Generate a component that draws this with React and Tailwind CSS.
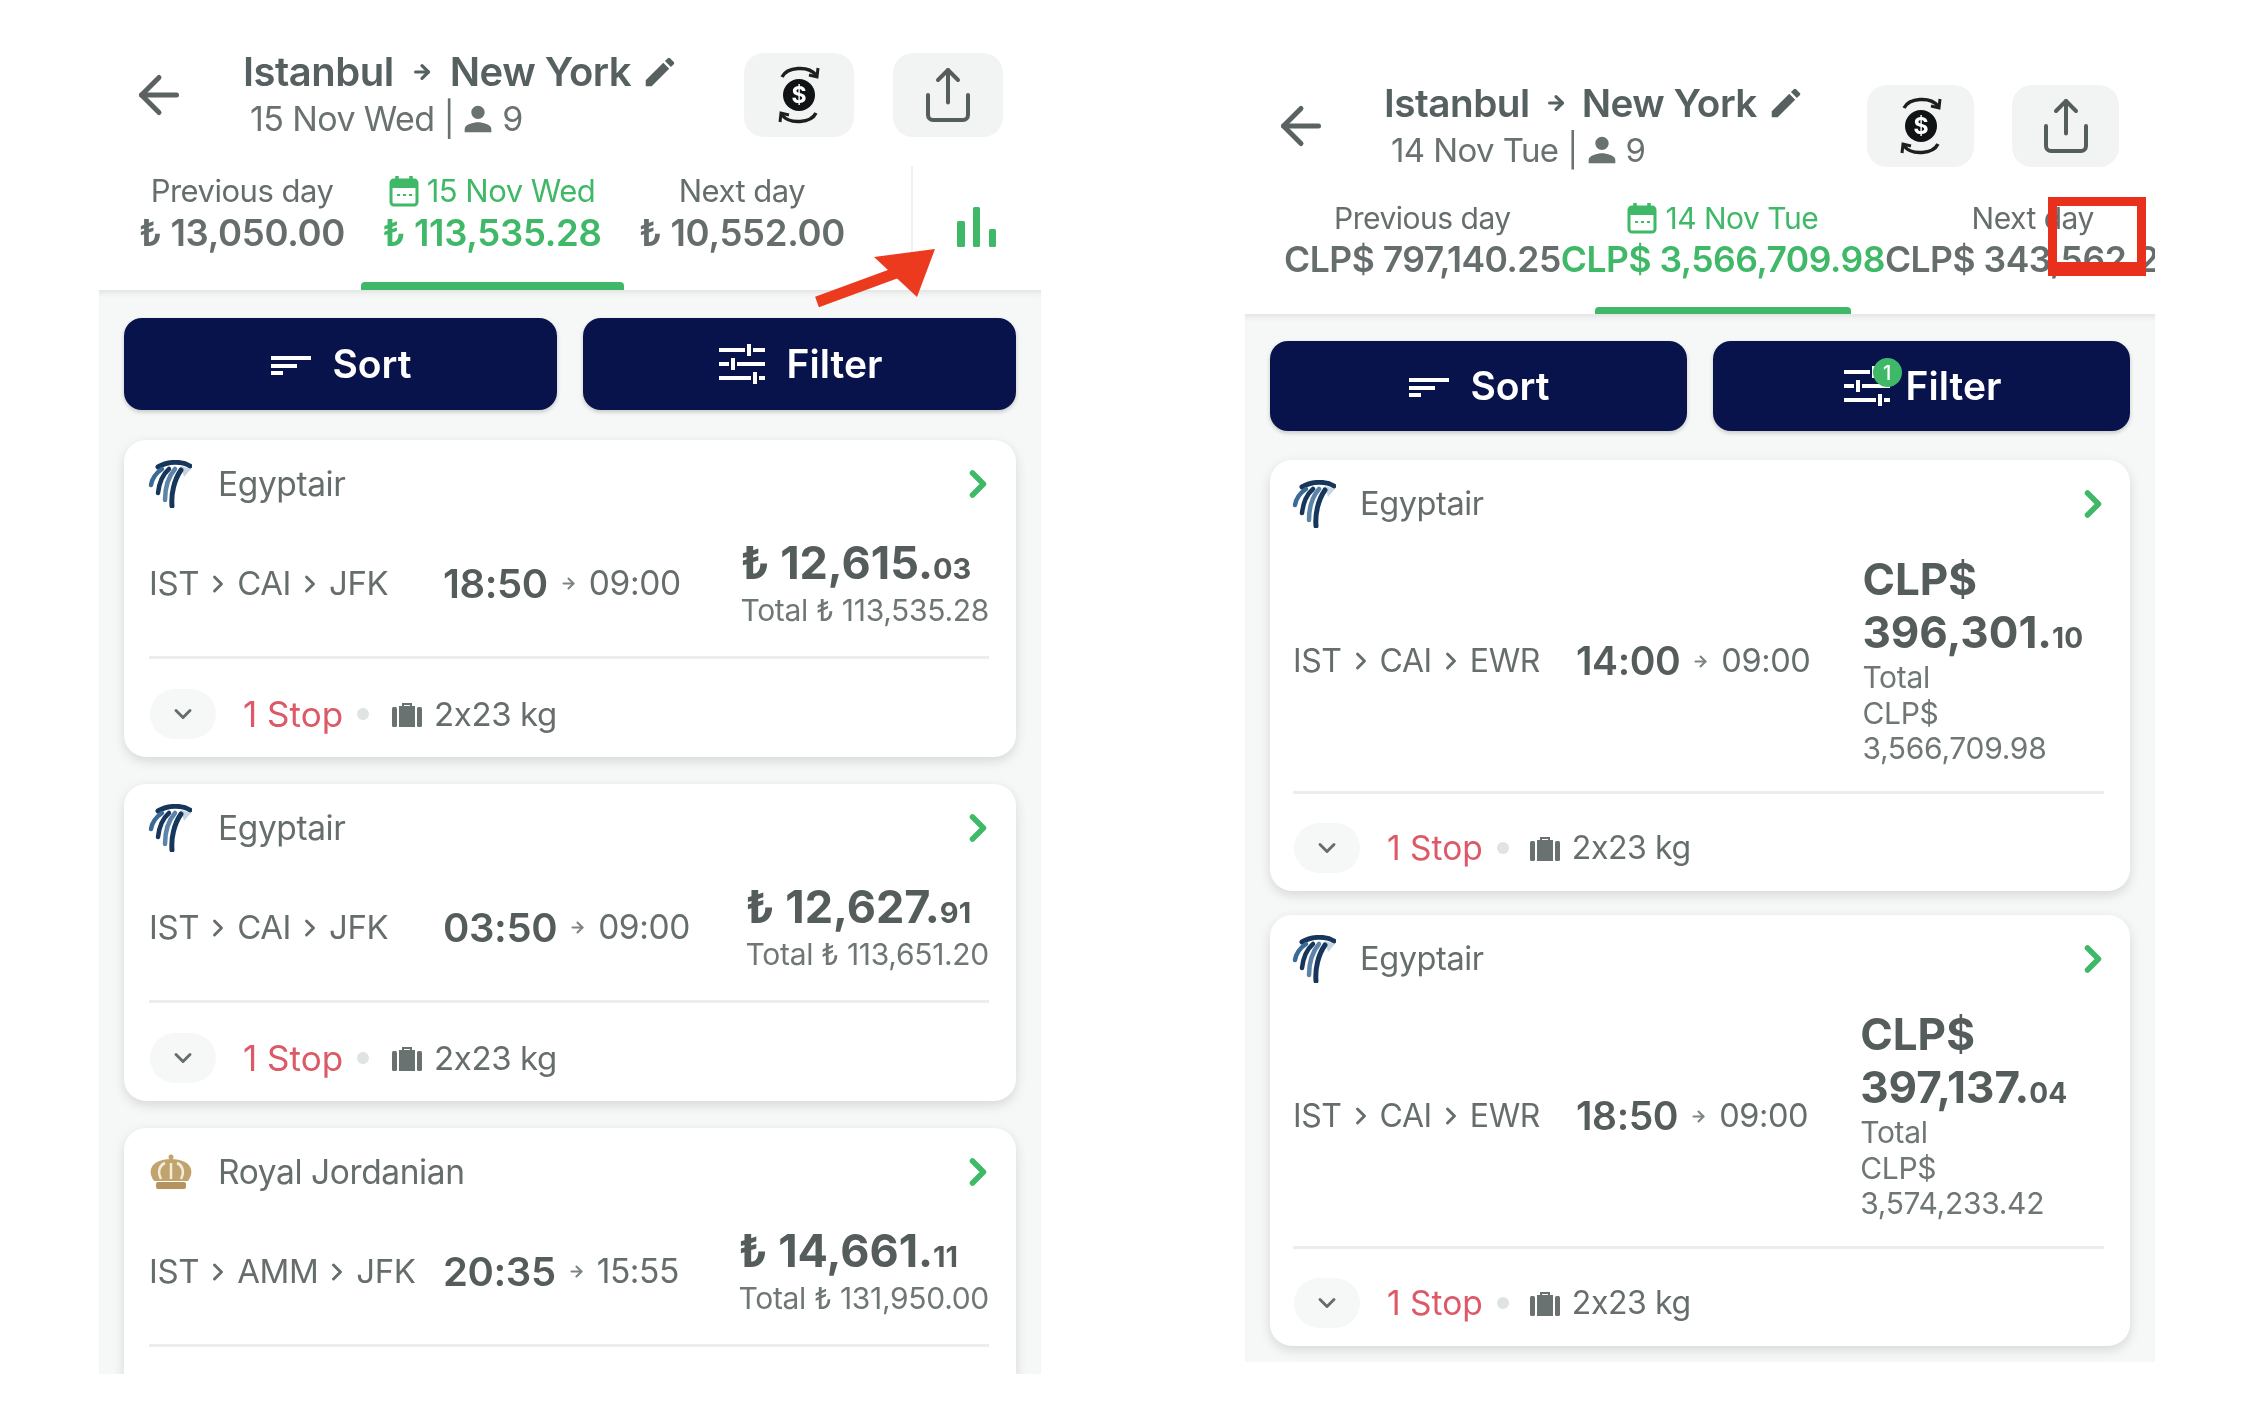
import React from "react";
import { ArrowLeft, ArrowRight, ChevronDown, ChevronRight, Share } from "lucide-react";
import { MdEdit, MdPerson } from "react-icons/md";

const leftFlights = [
  {
    logo: "egypt",
    airline: "Egyptair",
    route: ["IST", "CAI", "JFK"],
    depart: "18:50",
    arrive: "09:00",
    currency: "₺",
    whole: "12,615.",
    cents: "03",
    total: ["Total ₺ 113,535.28"],
  },
  {
    logo: "egypt",
    airline: "Egyptair",
    route: ["IST", "CAI", "JFK"],
    depart: "03:50",
    arrive: "09:00",
    currency: "₺",
    whole: "12,627.",
    cents: "91",
    total: ["Total ₺ 113,651.20"],
  },
  {
    // cut off by the bottom of the screen, the footer row is not visible
    logo: "crown",
    airline: "Royal Jordanian",
    route: ["IST", "AMM", "JFK"],
    depart: "20:35",
    arrive: "15:55",
    currency: "₺",
    whole: "14,661.",
    cents: "11",
    total: ["Total ₺ 131,950.00"],
    noFooter: true,
  },
];

const rightFlights = [
  {
    logo: "egypt",
    airline: "Egyptair",
    route: ["IST", "CAI", "EWR"],
    depart: "14:00",
    arrive: "09:00",
    currency: "CLP$",
    whole: "396,301.",
    cents: "10",
    total: ["Total", "CLP$", "3,566,709.98"],
  },
  {
    logo: "egypt",
    airline: "Egyptair",
    route: ["IST", "CAI", "EWR"],
    depart: "18:50",
    arrive: "09:00",
    currency: "CLP$",
    whole: "397,137.",
    cents: "04",
    total: ["Total", "CLP$", "3,574,233.42"],
  },
];

// the right screenshot is a little smaller than the left one
const leftSizes = {
  cardPad: "pl-[25px] pr-[27px]",
  logo: "w-[70px]",
  airline: "text-[33.5px]",
  route: "w-[294px] text-[33px]",
  depart: "text-[40px]",
  arrive: "text-[33.5px]",
  price: "text-[45px] leading-[48px]",
  cents: "text-[29px]",
  stop: "text-[35px]",
  bag: "text-[33px]",
  bagGap: "ml-[23px]",
  title: "text-[40px]",
  arrow: "mx-[17px]",
  sub: "text-[34px]",
  tabLabel: "text-[31px]",
  action: "w-[110px] h-[84px]",
  back: "-ml-[8px]",
};

const rightSizes = {
  cardPad: "pl-[23px] pr-[26px]",
  logo: "w-[68px]",
  airline: "text-[32.5px]",
  route: "w-[283px] text-[32px]",
  depart: "text-[39px]",
  arrive: "text-[32.5px]",
  price: "text-[44px] leading-[53px] w-min -mb-[5px]",
  cents: "text-[28px]",
  stop: "text-[33.5px]",
  bag: "text-[32px]",
  bagGap: "ml-[21px]",
  title: "text-[38.7px]",
  arrow: "mx-[15px]",
  sub: "text-[33px]",
  tabLabel: "text-[30px]",
  action: "w-[107px] h-[82px]",
  back: "-ml-[9px]",
};

const ExchangeIcon = () => (
  <svg width="46" height="70" viewBox="0 0 46 70" fill="none">
    <path d="M6 17C11 7 32 5 40 15" stroke="#1c1f1f" strokeWidth="3.5" />
    <path d="M33 15l8 2 1-9" stroke="#1c1f1f" strokeWidth="3" />
    <path d="M40 53C35 63 14 65 6 55" stroke="#1c1f1f" strokeWidth="3.5" />
    <path d="M13 55l-8-2-1 9" stroke="#1c1f1f" strokeWidth="3" />
    <circle cx="23" cy="35" r="16" fill="#111414" />
    <text x="23" y="43" textAnchor="middle" fontSize="23" fontWeight="700" fill="#fff" fontFamily="Inter">
      $
    </text>
  </svg>
);

const BarsIcon = () => (
  <svg width="40" height="40" viewBox="0 0 40 40" fill="#3fb868">
    <rect x="0" y="14" width="8" height="26" rx="1.5" />
    <rect x="16" y="0" width="7" height="40" rx="1.5" />
    <rect x="32" y="22" width="7" height="18" rx="1.5" />
  </svg>
);

const CalendarIcon = () => (
  <svg width="30" height="32" viewBox="0 0 30 32" fill="none">
    <rect x="2" y="5" width="26" height="25" rx="3" stroke="#3fb868" strokeWidth="3" />
    <path d="M2 6h26v7H2z" fill="#3fb868" />
    <path d="M8 1v6M22 1v6" stroke="#3fb868" strokeWidth="3.5" />
    <path d="M8 20h3M14 20h3M20 20h3" stroke="#3fb868" strokeWidth="2" />
  </svg>
);

const SortIcon = () => (
  <svg width="44" height="22" viewBox="0 0 44 22" stroke="#fff" strokeWidth="4">
    <path d="M2 5h40M2 13h26M2 20h12" />
  </svg>
);

const FilterIcon = () => (
  <svg width="50" height="40" viewBox="0 0 50 40" stroke="#fff" strokeWidth="4" fill="none">
    <path d="M2 6h26M36 6h12M32 0v12" />
    <path d="M2 20h10M20 20h28M16 14v12" />
    <path d="M2 34h32M42 34h6M38 28v12" />
  </svg>
);

const SuitcaseIcon = () => (
  <svg width="30" height="26" viewBox="0 0 30 26" fill="#6a7271">
    <path d="M10 5V2h10v3h-2V4h-6v1z" />
    <rect x="0" y="6" width="5" height="20" rx="1.5" />
    <rect x="7" y="5" width="16" height="21" />
    <rect x="25" y="6" width="5" height="20" rx="1.5" />
  </svg>
);

const EgyptLogo = () => (
  <svg width="44" height="48" viewBox="0 0 44 48" fill="none" strokeLinecap="round">
    <path d="M10 7C20 1 34 1 42 6" stroke="#16365c" strokeWidth="5" />
    <path d="M33 6L43 9 36 17z" fill="#c7d5e2" />
    <path d="M33 10C26 20 23 34 24 46" stroke="#16365c" strokeWidth="5" />
    <path d="M27 9C20 17 17 28 17 40" stroke="#5d84a8" strokeWidth="4.5" />
    <path d="M21 9C14 15 11 24 10 33" stroke="#16365c" strokeWidth="4.5" />
    <path d="M14 9C8 13 4 19 3 25" stroke="#3b6a94" strokeWidth="4.5" />
  </svg>
);

const CrownLogo = () => (
  <svg width="46" height="36" viewBox="0 0 46 36" fill="none">
    <circle cx="23" cy="3" r="2.5" fill="#c1a36d" />
    <path d="M6 27C-4 12 10 5 23 5s27 7 17 22z" fill="#c1a36d" />
    <path d="M13 25C9 17 12 11 17 9M23 25V9M33 25c4-8 1-14-4-16" stroke="#f4ecdc" strokeWidth="2.5" />
    <rect x="8" y="28" width="30" height="7" rx="2" fill="#b4935c" />
  </svg>
);

const Header = ({ date, pad, backWidth, height, gap, sizes }) => (
  <div className={`flex items-center ${height} ${pad}`}>
    <div className={backWidth}>
      <ArrowLeft size={60} strokeWidth={2} className={`text-[#5b6362] ${sizes.back}`} />
    </div>
    <div className="flex-1">
      <div className={`flex items-center ${sizes.title} leading-[48px] font-semibold text-[#566060] tracking-[-0.5px]`}>
        Istanbul
        <ArrowRight size={22} strokeWidth={3.5} className={sizes.arrow} />
        New York
        <MdEdit size={38} className="ml-[10px]" />
      </div>
      <div className={`flex items-center ml-[7px] ${sizes.sub} leading-[46px] text-[#6a7271] tracking-[-0.6px]`}>
        {date} |
        <MdPerson size={40} className="mx-[4px]" />
        <span>9</span>
      </div>
    </div>
    <div className={`flex ${gap}`}>
      <div className={`${sizes.action} rounded-[20px] bg-[#f2f4f4] flex items-center justify-center`}>
        <ExchangeIcon />
      </div>
      <div className={`${sizes.action} rounded-[20px] bg-[#f2f4f4] flex items-center justify-center`}>
        <Share size={60} strokeWidth={1.6} className="text-[#565e5d]" />
      </div>
    </div>
  </div>
);

const FlightCard = ({ flight, sizes, priceClass, cardHeight, middleHeight }) => (
  <div className={`${cardHeight} shrink-0 rounded-[22px] bg-white shadow-[0_4px_12px_rgba(0,0,0,0.13)] ${sizes.cardPad} pt-[21px]`}>
    <div className="flex items-center h-[46px]">
      <div className={`${sizes.logo} -ml-[1px]`}>{flight.logo === "crown" ? <CrownLogo /> : <EgyptLogo />}</div>
      <span className={`${sizes.airline} text-[#666e6d] tracking-[-0.4px]`}>{flight.airline}</span>
      <ChevronRight size={44} strokeWidth={3} className="ml-auto -mr-[11px] text-[#3fb868]" />
    </div>
    <div className={`flex items-center ${middleHeight} pt-[4px] border-b-[3px] border-[#eceeee]`}>
      <div className={`${sizes.route} flex items-center shrink-0 text-[#666e6d] tracking-[-0.4px]`}>
        {flight.route.map((code, i) => (
          <React.Fragment key={code}>
            {i > 0 && <ChevronRight size={28} strokeWidth={2.5} className="mx-[5px]" />}
            {code}
          </React.Fragment>
        ))}
      </div>
      <span className={`${sizes.depart} font-semibold text-[#555d5c] tracking-[-0.4px]`}>{flight.depart}</span>
      <ArrowRight size={17} strokeWidth={3} className="mx-[12px] shrink-0 text-[#7d8584]" />
      <span className={`${sizes.arrive} text-[#666e6d] tracking-[-0.4px]`}>{flight.arrive}</span>
      <div className={priceClass}>
        <div className={`${sizes.price} font-bold text-[#555d5c]`}>
          {flight.currency} {flight.whole}
          <span className={sizes.cents}>{flight.cents}</span>
        </div>
        {flight.total.map((line) => (
          <div key={line} className="text-[30px] leading-[35.5px] text-[#6f7776] tracking-[-0.3px] whitespace-nowrap">
            {line}
          </div>
        ))}
      </div>
    </div>
    {!flight.noFooter && (
      <div className={`flex items-center mt-[29px] ${sizes.bag} tracking-[-0.4px]`}>
        <div className="w-[66px] h-[50px] ml-[1px] rounded-[25px] bg-[#f6f7f7] flex items-center justify-center">
          <ChevronDown size={28} strokeWidth={2.5} className="text-[#666e6d]" />
        </div>
        <span className={`ml-[27px] ${sizes.stop} tracking-normal text-[#dc5a67]`}>1 Stop</span>
        <div className="ml-[14px] w-[12px] h-[12px] rounded-full bg-[#dfe3e3]" />
        <div className={sizes.bagGap}><SuitcaseIcon /></div>
        <span className="ml-[12px] text-[#666e6d]">2x23 kg</span>
      </div>
    )}
  </div>
);

const ActionButtons = ({ height, badge }) => (
  <div className={`flex gap-[26px] ${height}`}>
    <button className="flex-1 rounded-[18px] bg-[#07134a] flex items-center justify-center gap-[19px] text-white text-[39px] font-semibold shadow-[0_2px_4px_rgba(0,0,0,0.2)]">
      <SortIcon />
      Sort
    </button>
    <button className="flex-1 rounded-[18px] bg-[#07134a] flex items-center justify-center gap-[20px] text-white text-[39px] font-semibold shadow-[0_2px_4px_rgba(0,0,0,0.2)]">
      <span className="relative flex">
        <FilterIcon />
        {badge && (
          <span className="absolute -top-[8px] left-[31px] w-[29px] h-[29px] rounded-full bg-[#3fb868] flex items-center justify-center text-[20px] font-medium">
            1
          </span>
        )}
      </span>
      <span className={badge ? "-ml-[6px]" : ""}>Filter</span>
    </button>
  </div>
);

const LeftPhone = () => (
  <div className="relative w-[942px] h-[1374px] shrink-0 overflow-hidden pt-[53px]">
    <Header date="15 Nov Wed" pad="pl-[38px] pr-[38px]" backWidth="w-[106px]" height="h-[84px]" gap="gap-[39px]" sizes={leftSizes} />
    <div className="flex h-[124px] mt-[29px] pl-[18px]">
      {[
        { label: "Previous day", price: "₺ 13,050.00" },
        { label: "15 Nov Wed", price: "₺ 113,535.28", active: true },
        { label: "Next day", price: "₺ 10,552.00" },
      ].map((tab) => (
        <div
          key={tab.label}
          className={`w-[250px] flex flex-col items-center pt-[5px] ${tab.active ? "text-[#3fb868]" : "text-[#666e6d]"}`}
        >
          <div className={`flex items-center gap-[8px] ${leftSizes.tabLabel} leading-[40px] tracking-[-0.5px]`}>
            {tab.active && <CalendarIcon />}
            {tab.label}
          </div>
          <div className="text-[36.5px] leading-[44px] font-semibold tracking-[-0.3px]">{tab.price}</div>
          {tab.active && <div className="mt-auto w-[263px] h-[8px] shrink-0 rounded-t-[4px] bg-[#3fb868]" />}
        </div>
      ))}
      <div className="ml-[44px] w-[2px] h-[116px] bg-[#f0f2f2]" />
      <div className="ml-[44px] mt-[41px]"><BarsIcon /></div>
    </div>
    <div className="h-full bg-[#f6f8f8] px-[25px] pt-[28px] shadow-[inset_0_6px_6px_-4px_rgba(0,0,0,0.1)]">
      <ActionButtons height="h-[92px]" />
      <div className="flex flex-col gap-[27px] mt-[30px]">
        {leftFlights.map((flight) => (
          <FlightCard
            key={flight.depart}
            flight={flight}
            sizes={leftSizes}
            priceClass="ml-auto shrink-0"
            cardHeight="h-[317px]"
            middleHeight="h-[152px]"
          />
        ))}
      </div>
    </div>
    {/* red annotation arrow */}
    <svg className="absolute left-[600px] top-[240px]" width="250" height="70" viewBox="0 0 250 70">
      <path d="M118 62L205 30" stroke="#ec3a1e" strokeWidth="11" />
      <path d="M236 9L175 17 218 57z" fill="#ec3a1e" />
    </svg>
  </div>
);

const RightPhone = () => (
  <div className="relative w-[910px] h-[1362px] shrink-0 overflow-hidden pt-[85px]">
    <Header date="14 Nov Tue" pad="pl-[35px] pr-[36px]" backWidth="w-[104px]" height="h-[82px]" gap="gap-[38px]" sizes={rightSizes} />
    <div className="flex h-[147px] pl-[39px]">
      {[
        { label: "Previous day", price: "CLP$ 797,140.25" },
        { label: "14 Nov Tue", price: "CLP$ 3,566,709.98", active: true },
        { label: "Next day", price: "CLP$ 343,562.25" },
      ].map((tab) => (
        <div
          key={tab.label}
          className={`shrink-0 flex flex-col items-center pt-[31px] ${tab.active ? "text-[#3fb868]" : "text-[#666e6d]"}`}
        >
          <div className={`flex items-center gap-[8px] ${rightSizes.tabLabel} leading-[40px] tracking-[-0.5px]`}>
            {tab.active && <CalendarIcon />}
            {tab.label}
          </div>
          <div className="text-[35.5px] leading-[44px] font-semibold tracking-[-0.5px] whitespace-nowrap">{tab.price}</div>
          {tab.active && <div className="mt-auto w-[256px] h-[7px] shrink-0 rounded-t-[4px] bg-[#3fb868]" />}
        </div>
      ))}
    </div>
    <div className="h-full bg-[#f6f8f8] px-[25px] pt-[27px] shadow-[inset_0_6px_6px_-4px_rgba(0,0,0,0.1)]">
      <ActionButtons height="h-[90px]" badge />
      <div className="flex flex-col gap-[24px] mt-[29px]">
        {rightFlights.map((flight) => (
          <FlightCard
            key={flight.depart}
            flight={flight}
            sizes={rightSizes}
            priceClass="ml-[52px] -mt-[2px] shrink-0"
            cardHeight="h-[431px]"
            middleHeight="h-[267px]"
          />
        ))}
      </div>
    </div>
    {/* red annotation box */}
    <div className="absolute left-[803px] top-[197px] w-[98px] h-[79px] border-[9px] border-b-[14px] border-[#e8301c]" />
  </div>
);

const App = () => {
  return (
    <div className="min-h-screen w-[2268px] bg-white flex items-start gap-[204px] pl-[99px] font-['Inter',sans-serif] blur-[0.6px]">
      <LeftPhone />
      <RightPhone />
    </div>
  );
};

export default App;
